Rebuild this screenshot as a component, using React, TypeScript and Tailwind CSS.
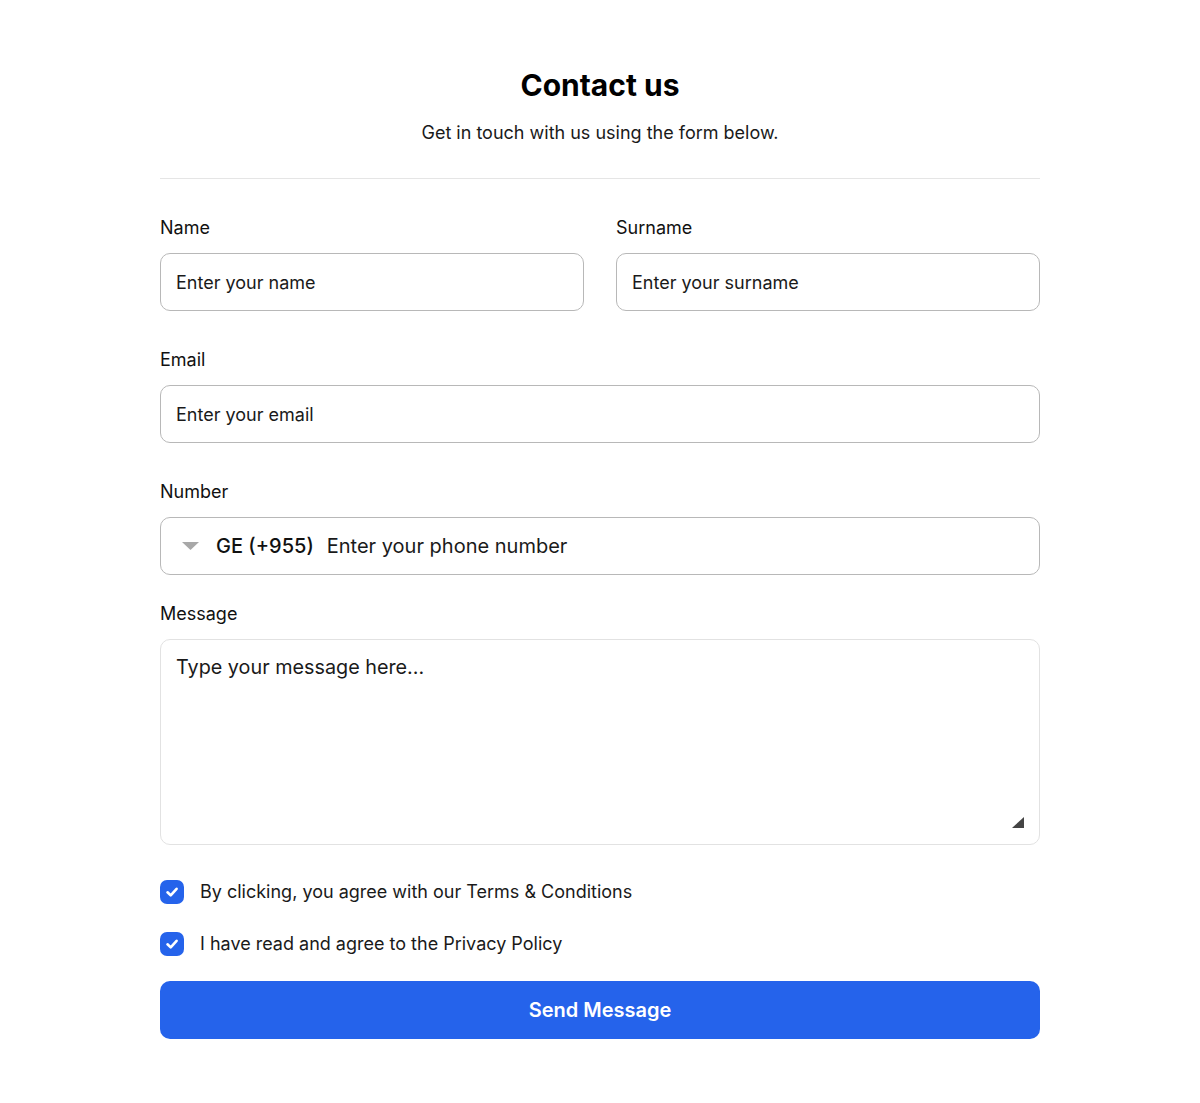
import React from "react";

function Check() {
  return (
    <div className="w-[24px] h-[24px] rounded-[7px] bg-[#2563eb] flex items-center justify-center shrink-0">
      <svg width="16" height="16" viewBox="0 0 16 16" fill="none">
        <path d="M3.5 8.3 L6.7 11.4 L12.6 4.8" stroke="white" strokeWidth="2.6" strokeLinecap="round" strokeLinejoin="round" />
      </svg>
    </div>
  );
}

function Field({ label, placeholder }: { label: string; placeholder: string }) {
  return (
    <div className="flex flex-col">
      <div className="text-[18px] leading-[24px] text-[#111] mb-[13px]">{label}</div>
      <div className="h-[58px] rounded-[10px] border border-[#b8b8b8] flex items-center px-[15px] text-[18px] text-[#1a1a1a]">
        {placeholder}
      </div>
    </div>
  );
}

export default function App() {
  return (
    <div className="min-h-[1103px] bg-white" style={{ fontFamily: "Inter, 'Noto Sans', sans-serif" }}>
      <div className="w-[880px] mx-auto pt-[66px]">
        <h1 className="text-center text-[30px] leading-[38px] font-bold text-black">Contact us</h1>
        <p className="text-center text-[18px] leading-[28px] text-[#1a1a1a] mt-[15px]">Get in touch with us using the form below.</p>
        <div className="h-px bg-[#e5e5e5] mt-[31px]" />
        <div className="grid grid-cols-2 gap-x-[32px] mt-[37px]">
          <Field label="Name" placeholder="Enter your name" />
          <Field label="Surname" placeholder="Enter your surname" />
        </div>
        <div className="mt-[37px]">
          <Field label="Email" placeholder="Enter your email" />
        </div>
        <div className="mt-[37px] flex flex-col">
          <div className="text-[18px] leading-[24px] text-[#111] mb-[13px]">Number</div>
          <div className="h-[58px] rounded-[10px] border border-[#b8b8b8] flex items-center pl-[21px] text-[20px]">
            <svg width="17" height="9" viewBox="0 0 17 9" className="mr-[17px]">
              <path d="M0 0 H17 L8.5 8 Z" fill="#a8a8a8" />
            </svg>
            <span className="font-medium text-[#111] mr-[13px]">GE (+955)</span>
            <span className="text-[#1a1a1a]">Enter your phone number</span>
          </div>
        </div>
        <div className="mt-[27px] flex flex-col">
          <div className="text-[18px] leading-[24px] text-[#111] mb-[13px]">Message</div>
          <div className="relative h-[206px] rounded-[10px] border border-[#e2e2e2] px-[15px] pt-[13px] text-[19.8px] leading-[28px] text-[#1a1a1a]">
            Type your message here...
            <svg width="12" height="11" viewBox="0 0 12 11" className="absolute right-[15px] bottom-[16px]">
              <path d="M12 0 V11 H0 Z" fill="#444" />
            </svg>
          </div>
        </div>
        <div className="flex flex-col gap-[28px] mt-[35px]">
          <div className="flex items-center gap-[16px] text-[18px] leading-[24px] text-[#1a1a1a]">
            <Check />
            <span>By clicking, you agree with our Terms &amp; Conditions</span>
          </div>
          <div className="flex items-center gap-[16px] text-[18px] leading-[24px] text-[#1a1a1a]">
            <Check />
            <span>I have read and agree to the Privacy Policy</span>
          </div>
        </div>
        <button className="mt-[25px] w-full h-[58px] rounded-[10px] bg-[#2563eb] text-white text-[20px] font-semibold">
          Send Message
        </button>
      </div>
    </div>
  );
}
